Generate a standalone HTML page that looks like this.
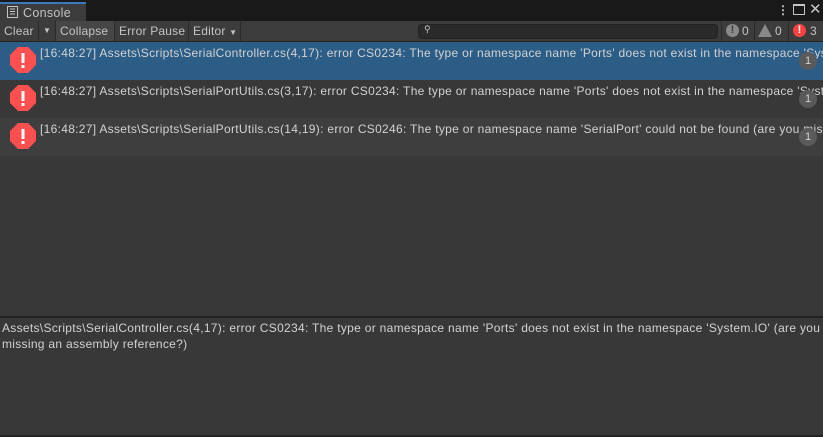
<!DOCTYPE html>
<html><head><style>
*{margin:0;padding:0;box-sizing:border-box}
body{width:823px;height:437px;background:#383838;font-family:"Liberation Sans",sans-serif;font-size:12px;color:#d2d2d2;position:relative;overflow:hidden}
.abs{position:absolute}
.tabbar{left:0;top:0;width:823px;height:21px;background:#191919}
.tab{left:0;top:2px;width:86px;height:19px;background:#3c3c3c;border-top:2px solid #3a79bb;color:#c4c4c4;font-size:12.5px;padding:2px 0 0 23px;letter-spacing:0.3px}
.tb{left:0;top:21px;width:823px;height:21px;background:#3c3c3c;border-bottom:1px solid #232323}
.btn{top:21px;height:20px;line-height:20px;color:#c4c4c4;padding-left:4px;border-right:1px solid #2a2a2a;letter-spacing:0.2px}
.row{left:0;width:823px;height:38px}
.txt{left:40px;width:783px;overflow:hidden;white-space:nowrap;color:#d2d2d2;letter-spacing:0.3px}
.badge{left:799px;width:18px;height:18px;border-radius:9px;background:#5a5a5a;color:#d2d2d2;text-align:center;line-height:18px;font-size:11px}
</style></head><body>
<div class="abs tabbar"></div>
<div class="abs tab">Console</div>
<svg class="abs" style="left:7px;top:6px" width="12" height="12"><rect x="0.5" y="0.5" width="10" height="11" fill="none" stroke="#c4c4c4"/><path d="M3 3h5M3 5.5h5M3 8h5" stroke="#c4c4c4"/></svg>
<div class="abs" style="left:777px;top:3px;color:#c4c4c4;font-weight:bold">⋮</div>
<div class="abs" style="left:793px;top:4px;width:12px;height:11px;border:1px solid #c4c4c4;border-top-width:2px"></div>
<div class="abs" style="left:809px;top:0px;color:#c4c4c4;font-size:15px">✕</div>
<div class="abs tb"></div>
<div class="abs btn" style="left:0;width:39px">Clear</div>
<div class="abs btn" style="left:39px;width:17px;font-size:8px">▼</div>
<div class="abs btn" style="left:56px;width:59px;background:#464646">Collapse</div>
<div class="abs btn" style="left:115px;width:74px">Error Pause</div>
<div class="abs btn" style="left:189px;width:52px">Editor <span style="font-size:8px">▼</span></div>
<div class="abs" style="left:418px;top:24px;width:300px;height:15px;border-radius:4px;background:#2a2a2a;border:1px solid #212121"></div>
<div class="abs" style="left:424px;top:24px;font-size:9px;color:#c4c4c4">⚲</div>
<div class="abs" style="left:721px;top:21px;width:101px;height:20px;border-left:1px solid #2a2a2a"></div>
<div class="abs" style="left:726px;top:24px;width:13px;height:13px;border-radius:7px;background:#8a8a8a;color:#3c3c3c;font-weight:bold;text-align:center;line-height:13px;font-size:11px">!</div>
<div class="abs" style="left:742px;top:24px;color:#c4c4c4">0</div>
<div class="abs" style="left:754px;top:21px;height:20px;border-left:1px solid #2a2a2a"></div>
<div class="abs" style="left:758px;top:24px;width:0;height:0;border-left:7px solid transparent;border-right:7px solid transparent;border-bottom:13px solid #8a8a8a"></div>
<div class="abs" style="left:775px;top:24px;color:#c4c4c4">0</div>
<div class="abs" style="left:788px;top:21px;height:20px;border-left:1px solid #2a2a2a"></div>
<div class="abs" style="left:793px;top:24px;width:13px;height:13px;border-radius:7px;background:#ff4040;color:#fff;font-weight:bold;text-align:center;line-height:13px;font-size:11px">!</div>
<div class="abs" style="left:810px;top:24px;color:#c4c4c4">3</div>

<div class="abs row" style="top:42px;background:#2c5d87"></div>
<div class="abs row" style="top:80px;background:#383838"></div>
<div class="abs row" style="top:118px;background:#3e3e3e"></div>

<svg class="abs" style="left:10px;top:47px" width="26" height="26"><polygon points="8,0 18,0 26,8 26,18 18,26 8,26 0,18 0,8" fill="#ff4f4f"/><rect x="11.5" y="6" width="3" height="10" fill="#fff"/><rect x="11.5" y="18" width="3" height="3" fill="#fff"/></svg>
<svg class="abs" style="left:10px;top:85px" width="26" height="26"><polygon points="8,0 18,0 26,8 26,18 18,26 8,26 0,18 0,8" fill="#ff4f4f"/><rect x="11.5" y="6" width="3" height="10" fill="#fff"/><rect x="11.5" y="18" width="3" height="3" fill="#fff"/></svg>
<svg class="abs" style="left:10px;top:123px" width="26" height="26"><polygon points="8,0 18,0 26,8 26,18 18,26 8,26 0,18 0,8" fill="#ff4f4f"/><rect x="11.5" y="6" width="3" height="10" fill="#fff"/><rect x="11.5" y="18" width="3" height="3" fill="#fff"/></svg>

<div class="abs txt" style="top:46px">[16:48:27] Assets\Scripts\SerialController.cs(4,17): error CS0234: The type or namespace name 'Ports' does not exist in the namespace 'System.IO'</div>
<div class="abs txt" style="top:84px">[16:48:27] Assets\Scripts\SerialPortUtils.cs(3,17): error CS0234: The type or namespace name 'Ports' does not exist in the namespace 'System.IO'</div>
<div class="abs txt" style="top:122px">[16:48:27] Assets\Scripts\SerialPortUtils.cs(14,19): error CS0246: The type or namespace name 'SerialPort' could not be found (are you missing</div>
<div class="abs badge" style="top:52px">1</div>
<div class="abs badge" style="top:90px">1</div>
<div class="abs badge" style="top:128px">1</div>

<div class="abs" style="left:0;top:316px;width:823px;height:2px;background:#232323"></div>
<div class="abs" style="left:2px;top:320px;width:821px;line-height:16px;color:#d2d2d2;letter-spacing:0.3px">Assets\Scripts\SerialController.cs(4,17): error CS0234: The type or namespace name 'Ports' does not exist in the namespace 'System.IO' (are you<br>missing an assembly reference?)</div>
<div class="abs" style="left:0;top:435px;width:823px;height:2px;background:#232323"></div>
</body></html>
